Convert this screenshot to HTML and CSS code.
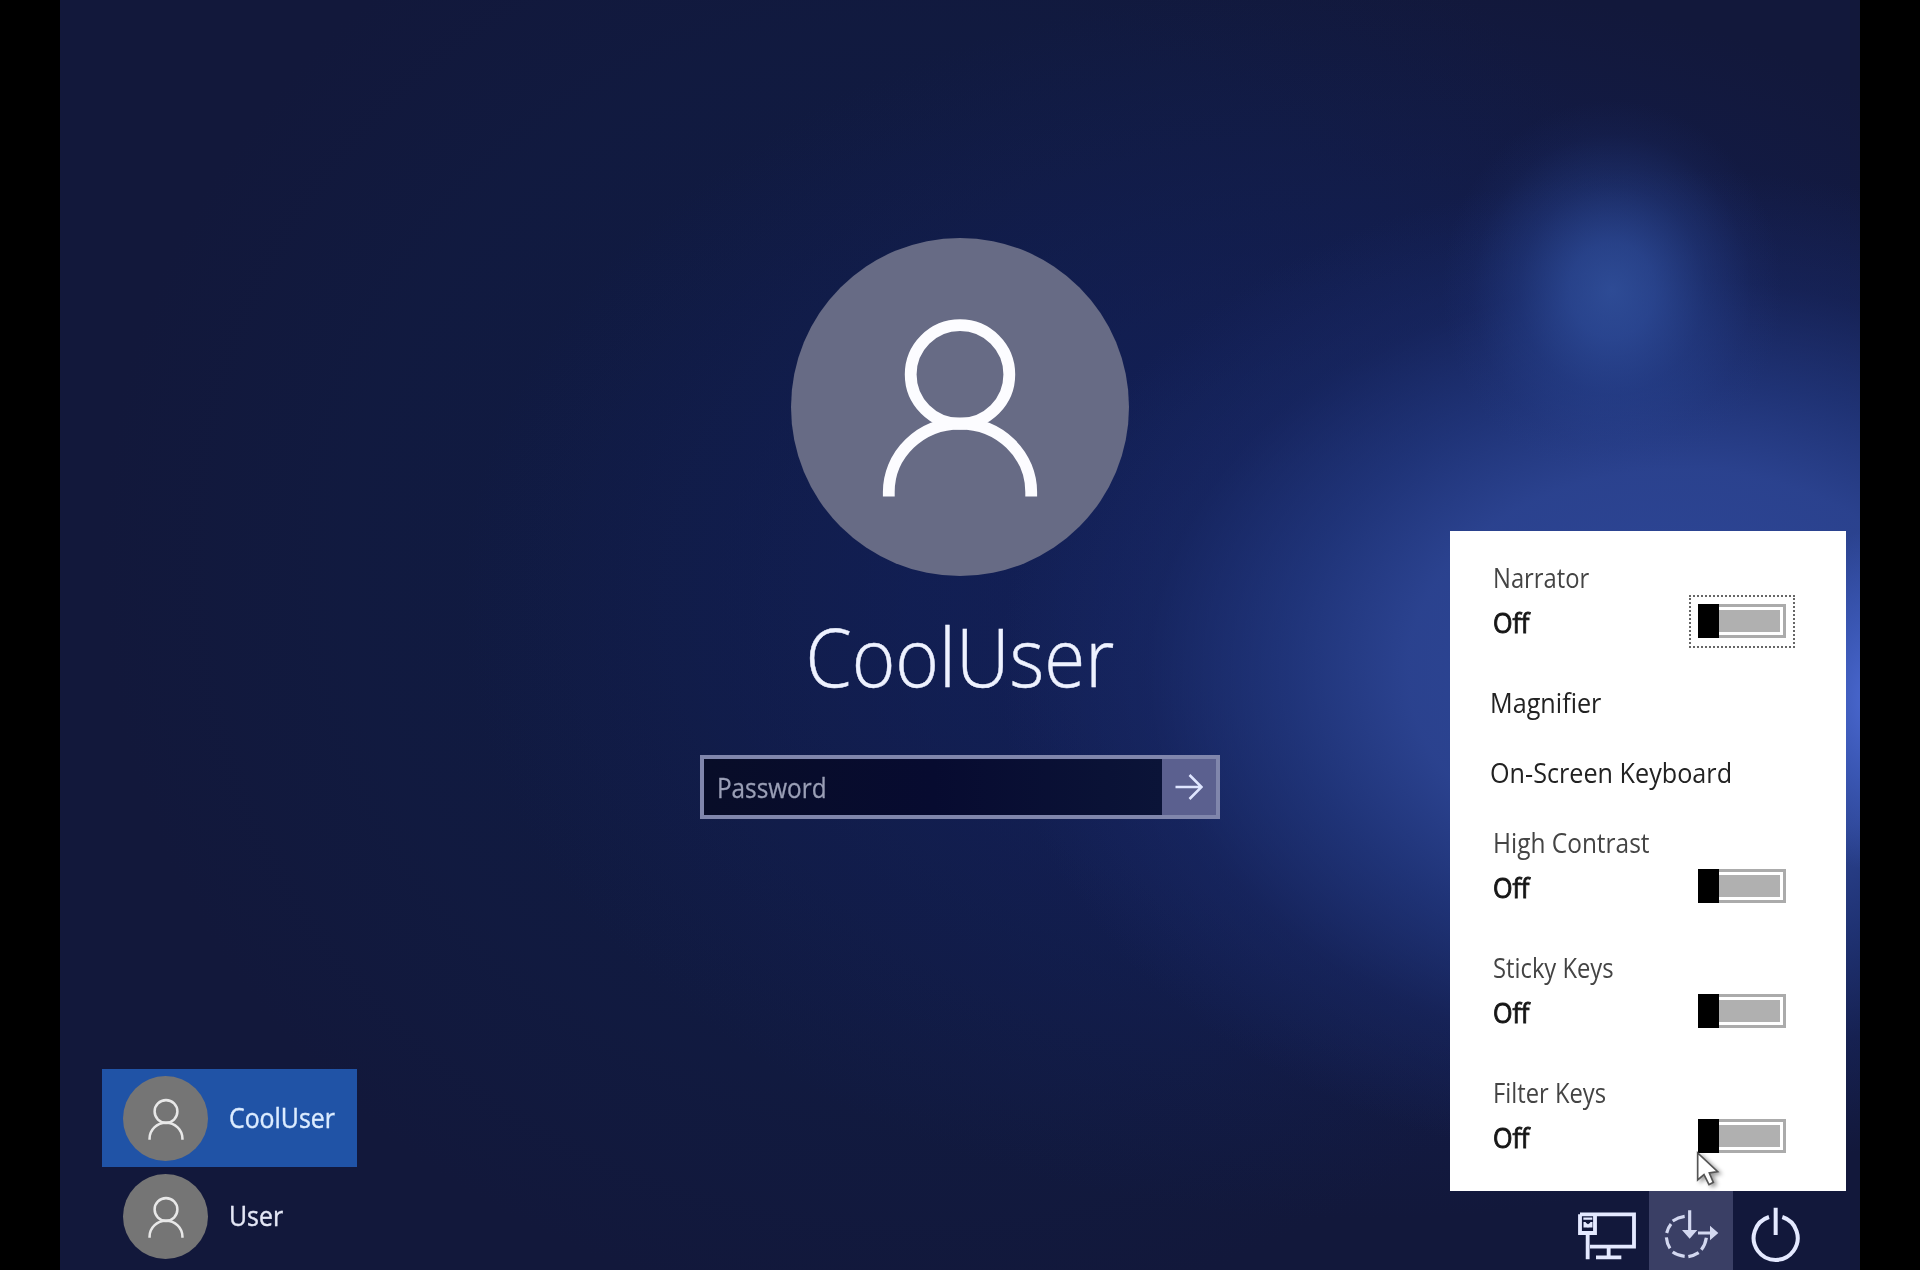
FILE: index.html
```html
<!DOCTYPE html>
<html lang="en">
<head>
<meta charset="utf-8">
<title>Sign in</title>
<link rel="stylesheet" href="styles.css">
</head>
<body>
<svg class="defs" width="0" height="0" aria-hidden="true">
  <symbol id="person" viewBox="0 0 338 338">
    <circle cx="169" cy="136.500" r="49.300"/>
    <path d="M97.800 258.500V254a71.200 68.500 0 0 1 142.400 0V258.500"/>
  </symbol>
</svg>
<div class="desktop">
  <nav class="users">
    <a class="user user-active"><span class="user-pic"><svg><use href="#person"/></svg></span><span class="user-name">CoolUser</span></a>
    <a class="user"><span class="user-pic"><svg><use href="#person"/></svg></span><span class="user-name">User</span></a>
  </nav>

  <main class="login">
    <div class="avatar"><svg><use href="#person"/></svg></div>
    <h1 class="login-name">CoolUser</h1>
    <div class="password">
      <div class="password-field"><span class="password-hint">Password</span></div>
      <button class="submit" aria-label="Submit">
        <svg width="28" height="28" viewBox="0 0 28 28"><path d="M0.500 14H26.500M14.500 2L26.500 14L14.500 26"/></svg>
      </button>
    </div>
  </main>

  <aside class="side">
    <section class="panel">
      <div class="option">
        <div class="option-text"><span class="option-label">Narrator</span><span class="option-state">Off</span></div>
        <span class="toggle toggle-focus"><i class="thumb"></i><i class="track"></i></span>
      </div>
      <div class="link">Magnifier</div>
      <div class="link">On-Screen Keyboard</div>
      <div class="option">
        <div class="option-text"><span class="option-label option-label-wide">High Contrast</span><span class="option-state">Off</span></div>
        <span class="toggle"><i class="thumb"></i><i class="track"></i></span>
      </div>
      <div class="option">
        <div class="option-text"><span class="option-label">Sticky Keys</span><span class="option-state">Off</span></div>
        <span class="toggle"><i class="thumb"></i><i class="track"></i></span>
      </div>
      <div class="option">
        <div class="option-text"><span class="option-label">Filter Keys</span><span class="option-state">Off</span></div>
        <span class="toggle"><i class="thumb"></i><i class="track"></i></span>
      </div>
      <svg class="cursor" width="28" height="38" viewBox="0 0 84 114"><path d="M5 6V87L24 71L39 101L52 94L40 66L65 62Z"/></svg>
    </section>
    <div class="tray">
      <span class="tray-item">
        <svg viewBox="75 152 252 237"><path class="s11" d="M120 222H282V319H150M120 222V278H165V222M143 280V357M206 322V350M168 351H244"/><path class="s7" d="M130 235H157M134 245V258H154V245M137 250L144 258L151 250"/></svg>
      </span>
      <span class="tray-item tray-active">
        <svg viewBox="327 151 252 237"><path class="s9" d="M398 241Q414 230 434 227M380 277Q384 261 393 250M379 290Q381 310 390 323M398 334Q413 345 434 347M445 348Q462 345 476 336M484 327Q496 312 499 291M449 209V275M474 277H514"/><path class="head" d="M426 268H472L449 294ZM510 255V299L535 277Z"/></svg>
      </span>
      <span class="tray-item">
        <svg viewBox="579 152 252 237"><path class="s12" d="M687 230A66 66 0 1 0 727 230M707 202V284"/></svg>
      </span>
    </div>
  </aside>
</div>
</body>
</html>
```
FILE: styles.css
```css
* { box-sizing: border-box; }

body {
  margin: 0;
  background: #000;
  font-family: "Open Sans", "Noto Sans", sans-serif;
}

.defs { display: block; }

.desktop {
  display: grid;
  grid-template-columns: 460px 880px 460px;
  width: 1800px;
  height: 1270px;
  margin: 0 auto;
  overflow: hidden;
  background:
    radial-gradient(90px 170px at 1810px 700px, #4a68d0 0%, #4261c6aa 45%, #3a58bb00 100%),
    radial-gradient(170px 190px at 1552px 290px, #3354a2d0 0%, #3050a0b0 25%, #29469560 55%, #26409018 82%, #28408a00 100%),
    radial-gradient(680px 500px at 1620px 670px, #2e4799 0%, #2c4492f0 40%, #243b85b8 58%, #1c2e7060 78%, #182a6800 100%),
    radial-gradient(900px 620px at 1300px 600px, #16266aa0 0%, #14226080 50%, #12183b00 100%),
    radial-gradient(820px 760px at 860px 560px, #0f1b45 0%, #101c4480 70%, #12183b00 100%),
    #12183b;
}

.users {
  display: flex;
  flex-direction: column;
  justify-content: flex-end;
  align-items: flex-start;
  padding: 0 0 5px 42px;
}

.user {
  display: flex;
  align-items: center;
  gap: 21px;
  width: 255px;
  height: 98px;
  padding-left: 21px;
  color: #e4e7f5;
}

.user-active { background: #2053a6; color: #dcecff; }

.user-pic {
  width: 85px;
  height: 85px;
  border-radius: 50%;
  background: #757575;
}

.user-pic svg { display: block; width: 78px; height: 78px; margin: 4px 0 0 4px; stroke-width: 11; stroke: #e8e8e8; }

svg { fill: none; }

.user-name {
  font-size: 27px;
  line-height: 36px;
  transform: scaleX(0.92);
  transform-origin: left;
  -webkit-text-stroke: 0.4px;
}

.login {
  display: flex;
  flex-direction: column;
  align-items: center;
  padding-top: 238px;
}

.avatar {
  width: 338px;
  height: 338px;
  border-radius: 50%;
  background: #676b85;
}

.avatar svg { display: block; width: 338px; height: 338px; stroke: #fcfcff; stroke-width: 11.800; }

.login-name {
  margin: 25px 0 0;
  height: 154px;
  font-size: 81px;
  font-weight: 300;
  line-height: 110px;
  color: #eef2ff;
  transform: scaleX(0.92);
  -webkit-text-stroke: 0.5px;
}

.password {
  display: flex;
  width: 520px;
  height: 64px;
  border: 4px solid #8086ac;
}

.password-field {
  flex: 1;
  padding: 10px 0 0 13px;
  background: linear-gradient(90deg, #080d28, #070b30 50%, #0b1438);
}

.password-hint {
  display: inline-block;
  font-size: 27px;
  line-height: 38px;
  color: #9a9fb6;
  transform: scaleX(0.9);
  transform-origin: left;
  -webkit-text-stroke: 0.3px;
}

.submit {
  width: 54px;
  padding: 0;
  border: 0;
  background: #5b608f;
}

.submit svg { display: block; margin: 0 auto; stroke: #dfe6ff; stroke-width: 2.600; }

.side {
  display: flex;
  flex-direction: column;
  justify-content: flex-end;
  align-items: flex-end;
  padding-right: 14px;
}

.panel {
  position: relative;
  width: 396px;
  height: 660px;
  padding: 28px 60px 0 40px;
  background: #fff;
  color: #222;
  font-size: 27px;
}

.option {
  display: flex;
  justify-content: space-between;
  height: 125px;
  padding-left: 3px;
}

.option-text { display: flex; flex-direction: column; align-items: flex-start; }

.option-text span {
  height: 45px;
  line-height: 38px;
  white-space: nowrap;
  transform-origin: left;
}

.option-label { color: #444; transform: scaleX(0.88); }

.option-label-wide { transform: scaleX(0.905); }

.option-state {
  color: #161616;
  transform: scaleX(0.93);
  -webkit-text-stroke: 0.9px;
}

.link {
  height: 70px;
  line-height: 38px;
  white-space: nowrap;
  transform: scaleX(0.933);
  transform-origin: left;
}

.toggle {
  position: relative;
  display: flex;
  width: 88px;
  height: 34px;
  margin-top: 45px;
}

.toggle-focus::after {
  content: "";
  position: absolute;
  inset: -9px -9px -10px;
  border: 2px dotted #666;
}

.thumb { width: 21px; background: #000; }

.track {
  flex: 1;
  border: 3px solid #ababab;
  border-left: 0;
  padding: 3px 3px 3px 0;
  background: #b0b0b0 content-box;
}

.cursor {
  position: absolute;
  left: 246px;
  top: 620px;
  fill: #fff;
  stroke: #555;
  stroke-width: 5;
  filter: drop-shadow(3px 2px 2px #0006);
}

.tray { display: flex; margin-right: 29px; }

.tray-item { width: 84px; height: 79px; stroke: #e4e9ff; }

.tray-item svg { display: block; width: 84px; height: 79px; }

.tray-active { background: #3a3f65; stroke: #d3d8f0; }

.s7 { stroke-width: 7; }
.s9 { stroke-width: 9.500; }
.s11 { stroke-width: 11.500; }
.s12 { stroke-width: 12; }

.head { fill: #d3d8f0; stroke: none; }
```
